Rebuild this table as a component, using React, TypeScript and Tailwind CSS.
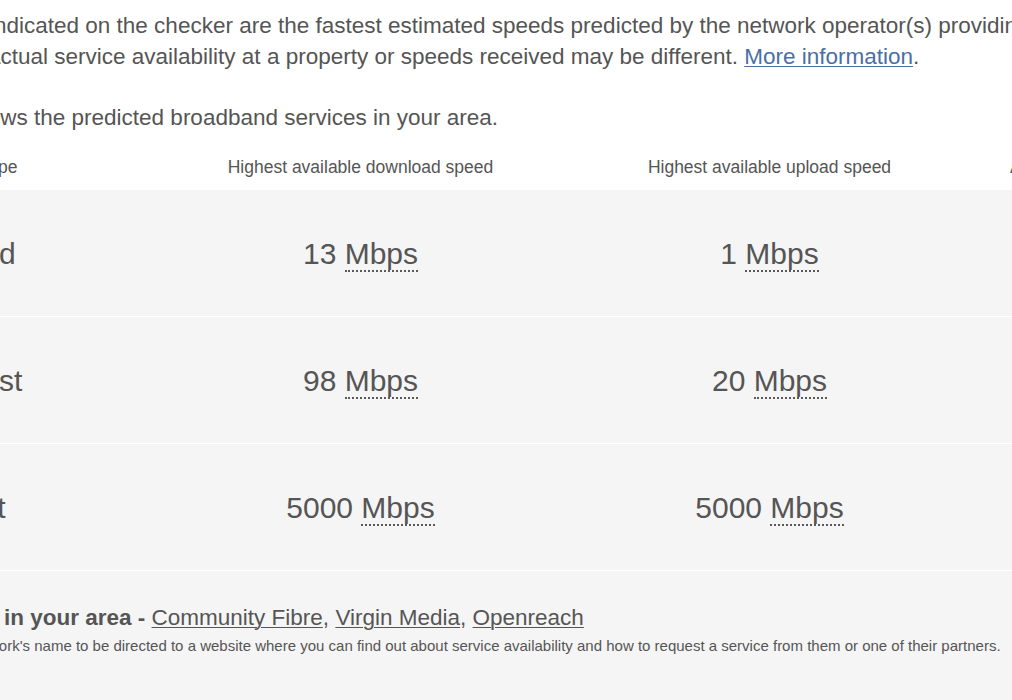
import React from "react";

const rows = [
  { type: "Standard", down: "13", up: "1" },
  { type: "Superfast", down: "98", up: "20" },
  { type: "Ultrafast", down: "5000", up: "5000" },
];

const Speed: React.FC<{ value: string }> = ({ value }) => (
  <span>
    {value}{" "}
    <span className="border-b-2 border-dotted border-[#5a5a5a]" title="Megabits per second">
      Mbps
    </span>
  </span>
);

export default function App() {
  return (
    <div className="min-h-screen overflow-hidden bg-[#f5f5f5] font-['Liberation_Sans',Arial,sans-serif] text-[#555555]">
      {/* Intro text + table header */}
      <div className="bg-white pt-[9.5px]">
        <div className="text-[22.5px] leading-[31.5px] whitespace-nowrap">
          <div className="-ml-[11px]">
            indicated on the checker are the fastest estimated speeds predicted by the network operator(s) providing
            the services
          </div>
          <div className="-ml-[12px]">
            actual service availability at a property or speeds received may be different.{" "}
            <a href="#" className="text-[#4a6fa5] underline underline-offset-2 decoration-1">
              More information
            </a>
            .
          </div>
          <div className="mt-[29px] -ml-[36px]">shows the predicted broadband services in your area.</div>
        </div>

        <div className="mt-[22px] -ml-[106px] grid grid-cols-[262px_409px_409px_409px] pb-[11px] text-[17.5px] leading-[24px] whitespace-nowrap">
          <div>Broadband type</div>
          <div className="text-center">Highest available download speed</div>
          <div className="text-center">Highest available upload speed</div>
          <div className="pl-[36px]">Availability</div>
        </div>
      </div>

      {/* Table rows */}
      <div className="text-[30px] whitespace-nowrap">
        {rows.map((r) => (
          <div
            key={r.type}
            className="-ml-[106px] grid h-[127px] grid-cols-[262px_409px_409px_409px] items-center border-b border-white"
          >
            <div>{r.type}</div>
            <div className="text-center">
              <Speed value={r.down} />
            </div>
            <div className="text-center">
              <Speed value={r.up} />
            </div>
            <div />
          </div>
        ))}
      </div>

      {/* Networks */}
      <div className="pt-[30.5px] whitespace-nowrap">
        <div className="text-[22.5px] leading-[31.5px] pl-[4px]">
          <span className="font-bold">in your area - </span>
          <a href="#" className="underline decoration-1 underline-offset-2">Community Fibre</a>,{" "}
          <a href="#" className="underline decoration-1 underline-offset-2">Virgin Media</a>,{" "}
          <a href="#" className="underline decoration-1 underline-offset-2">Openreach</a>
        </div>
        <div className="mt-[3px] -ml-[12px] text-[15px] leading-[20px]">
          work's name to be directed to a website where you can find out about service availability and how to
          request a service from them or one of their partners.
        </div>
      </div>
    </div>
  );
}
